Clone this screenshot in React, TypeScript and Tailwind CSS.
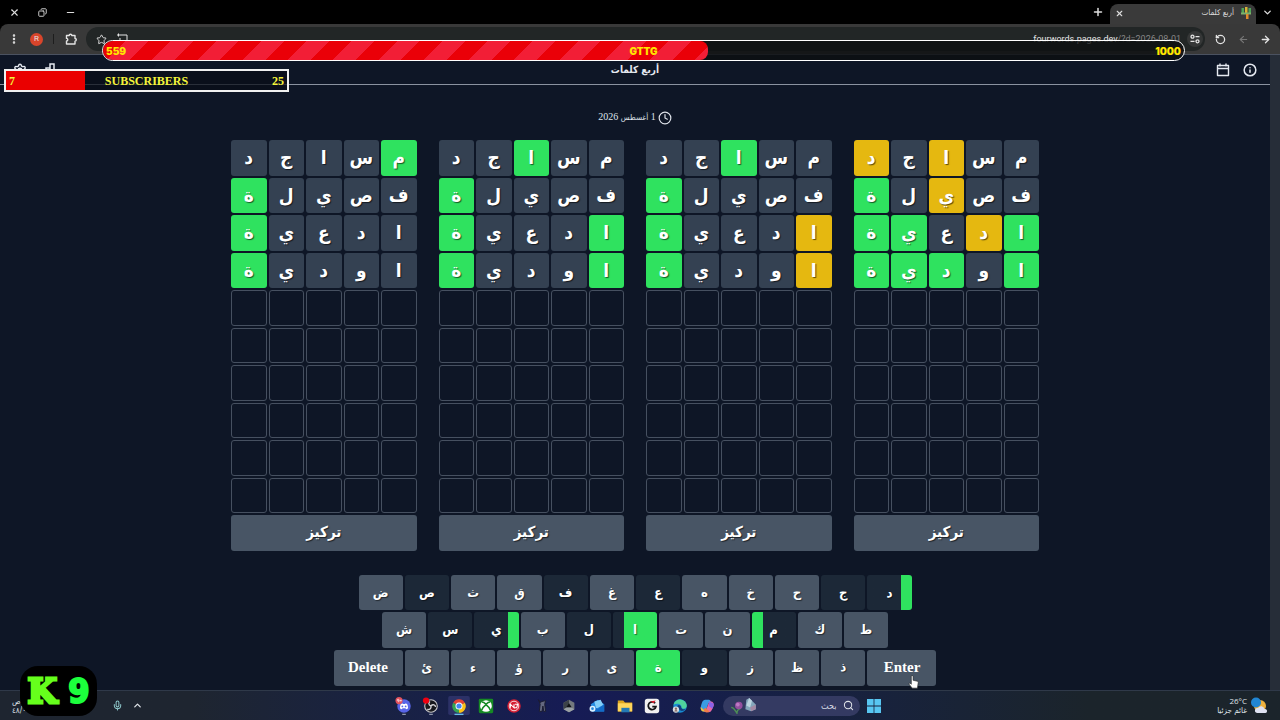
import type { ReactNode } from 'react';
import {
  ArrowLeft,
  ArrowRight,
  ChevronDown,
  ChevronUp,
  Clock,
  Copy,
  EllipsisVertical,
  Info,
  Mic,
  Minus,
  Plus,
  RotateCcw,
  Search,
  Settings,
  Star,
  X,
} from 'lucide-react';

type Mark = '-' | 'g' | 'y';

const WORDS = ['مساجد', 'فصيلة', 'ادعية', 'اودية'];

// One string per guess; marks are listed in reading order (right to left).
const BOARDS: string[][] = [
  ['--y-y', '--y-g', 'gy-gg', 'g-ggg'],
  ['--g--', '----g', 'y---g', 'y---g'],
  ['--g--', '----g', 'g---g', 'g---g'],
  ['g----', '----g', '----g', '----g'],
];

const TILE: Record<Mark, string> = {
  '-': 'bg-[#344152]',
  g: 'bg-[#2fe25f]',
  y: 'bg-[#e5b810]',
};

const EMPTY_ROWS = 6;

function Board({ marks, label }: { marks: string[]; label: string }) {
  return (
    <section
      dir="rtl"
      aria-label={label}
      className="grid auto-rows-fr grid-cols-5 gap-[2px] font-['DejaVu_Sans_Condensed','DejaVu_Sans',sans-serif]"
    >
      {WORDS.map((word, r) =>
        word.split('').map((ch, c) => (
          <div
            key={`${r}-${c}`}
            className={`flex aspect-square items-center justify-center rounded-[3px] text-[19px] leading-none font-bold text-white [text-shadow:1px_1px_1px_rgba(0,0,0,0.6)] ${TILE[marks[r][c] as Mark]}`}
          >
            {ch}
          </div>
        )),
      )}
      {Array.from({ length: EMPTY_ROWS * 5 }, (_, i) => (
        <div key={i} className="aspect-square rounded-[3px] border border-[#465060]" />
      ))}
      <button className="col-span-5 rounded-[3px] bg-[#485565] text-[15px] leading-none font-bold text-white [text-shadow:1px_1px_1px_rgba(0,0,0,0.6)]">
        تركيز
      </button>
    </section>
  );
}

const KEY_ROWS = ['ضصثقفغعهخحجد', 'شسيبلاتنمكط', 'ئءؤرىةوزظذ'];

const KEY_STYLE: Record<string, string> = {
  ص: 'bg-[#1c2837]',
  ف: 'bg-[#1c2837]',
  ع: 'bg-[#1c2837]',
  ج: 'bg-[#1c2837]',
  س: 'bg-[#1c2837]',
  ل: 'bg-[#1c2837]',
  و: 'bg-[#1c2837]',
  د: 'bg-linear-to-r from-[#1c2837] from-75% to-[#2fe25f] to-75%',
  ي: 'bg-linear-to-r from-[#1c2837] from-75% to-[#2fe25f] to-75%',
  ا: 'bg-linear-to-r from-[#1c2837] from-25% to-[#2fe25f] to-25%',
  م: 'bg-linear-to-r from-[#2fe25f] from-25% to-[#1c2837] to-25%',
  ة: 'bg-[#2fe25f]',
};

function Key({ ch }: { ch: string }) {
  return (
    <button
      className={`min-w-0 flex-1 rounded-[3px] font-['DejaVu_Sans_Condensed','DejaVu_Sans',sans-serif] text-[13px] leading-none font-bold text-white [text-shadow:1px_1px_1px_rgba(0,0,0,0.5)] ${KEY_STYLE[ch] ?? 'bg-[#485565]'}`}
    >
      {ch}
    </button>
  );
}

function WideKey({ children }: { children: ReactNode }) {
  return (
    <button className="w-[69px] shrink-0 rounded-[3px] bg-[#485565] text-[15px] leading-none font-bold text-white">
      {children}
    </button>
  );
}

const ROW_WIDTH = ['w-[553px]', 'w-[506px]', 'w-[603px]'];

function Keyboard() {
  return (
    <div dir="ltr" className="grid h-[111px] grid-rows-3 justify-items-center gap-[2px]">
      {KEY_ROWS.map((row, i) => (
        <div key={row} className={`flex max-w-full gap-[2px] ${ROW_WIDTH[i]}`}>
          {i === 2 && <WideKey>Delete</WideKey>}
          {row.split('').map((ch) => (
            <Key key={ch} ch={ch} />
          ))}
          {i === 2 && <WideKey>Enter</WideKey>}
        </div>
      ))}
    </div>
  );
}

function TabStrip() {
  return (
    <div className="flex h-6 items-center bg-black text-[#dddddd]">
      <div className="flex flex-1 items-center gap-[18px] pl-[9px]">
        <button aria-label="Close window"><X size={11} strokeWidth={2.4} /></button>
        <button aria-label="Restore window"><Copy size={9} strokeWidth={2.4} className="-scale-x-100" /></button>
        <button aria-label="Minimize window"><Minus size={11} strokeWidth={2.4} /></button>
      </div>
      <button aria-label="New tab" className="mr-[6px]"><Plus size={12} strokeWidth={3} /></button>
      <div className="mt-1 flex w-[146px] items-center self-stretch rounded-t-lg bg-[#3a3a3a] pr-[4px] pb-[2px] pl-[5px]">
        <button aria-label="Close tab"><X size={9} strokeWidth={3} /></button>
        <span dir="rtl" className="ml-auto font-['DejaVu_Sans_Condensed','DejaVu_Sans',sans-serif] text-[8px] leading-none">أربع كلمات</span>
        <svg viewBox="0 0 12 12" className="ml-[6px] size-3">
          <path d="M1.500 1h2.500v5h-2.500z" fill="#4ea558" />
          <path d="M5 0h2.500v7H5z" fill="#d8b436" />
          <path d="M8.500 1H11v5H8.500z" fill="#4ea558" />
          <path d="M1 5.500h10v2H1z" fill="#7fb06a" />
          <path d="M6 7h2.500v5H6z" fill="#e08b2c" />
        </svg>
      </div>
      <button aria-label="Search tabs" className="mr-[7px] ml-[6px]"><ChevronDown size={11} strokeWidth={3} /></button>
    </div>
  );
}

function Toolbar() {
  return (
    <div className="bg-black">
      <div className="flex h-[31px] items-center rounded-t-lg border-b border-[#4b5260] bg-[#393939] text-[#e4e4e4]">
        <button aria-label="Browser menu" className="ml-[8px]"><EllipsisVertical size={12} strokeWidth={3} /></button>
        <button className="ml-[10px] flex size-[13px] items-center justify-center rounded-full bg-[#d9452b] font-['Roboto',sans-serif] text-[8px] leading-none">R</button>
        <span className="ml-[10px] h-[10px] w-px bg-[#1d1d1d]" />
        <button aria-label="Extensions" className="ml-[11px]">
          <svg viewBox="0 0 12 12" className="size-3" fill="none" stroke="currentColor" strokeWidth="1.400" strokeLinejoin="round">
            <path d="M1.500 2.500h2.700a1.300 1.300 0 0 1 2.600 0h3.200v3a1.300 1.300 0 0 1 0 2.600v2.900H1.500V8a1.300 1.300 0 0 0 0-2.600z" />
          </svg>
        </button>
        <div className="ml-[9px] flex h-6 flex-1 items-center rounded-full bg-[#222626] pr-[2px] pl-[10px]">
          <Star size={11} strokeWidth={2} />
          <svg viewBox="0 0 12 12" className="ml-[9px] size-3" fill="none" stroke="currentColor" strokeWidth="1">
            <path d="M4 2h7v8H6M1 2h3M2.500.500v3M4 5v5" />
          </svg>
          <span className="ml-auto font-['Roboto',sans-serif] text-[9px] leading-none">
            fourwords.pages.dev<span className="text-[#858585]">/?d=2026-08-01</span>
          </span>
          <span className="ml-[6px] flex size-4 items-center justify-center rounded-full bg-[#353737]">
            <svg viewBox="0 0 10 10" className="size-[10px]" fill="none" stroke="currentColor" strokeWidth="1.300">
              <path d="M5.500 2.700H9.500M.5 7.300H4.500" />
              <circle cx="2.500" cy="2.700" r="1.500" />
              <circle cx="7.500" cy="7.300" r="1.500" />
            </svg>
          </span>
        </div>
        <button aria-label="Reload" className="ml-[10px]"><RotateCcw size={11} strokeWidth={2.8} /></button>
        <button aria-label="Forward" className="ml-[12px] text-[#777777]"><ArrowLeft size={11} strokeWidth={2.4} /></button>
        <button aria-label="Back" className="mr-[9px] ml-[11px]"><ArrowRight size={11} strokeWidth={2.8} /></button>
      </div>
    </div>
  );
}

function PageHeader() {
  return (
    <header className="grid h-[30px] grid-cols-3 items-center border-b border-[#8a92a0] px-[13px] text-[#e5e9f0]">
      <div className="flex gap-[14px]">
        <button aria-label="Settings"><Settings size={14} strokeWidth={2.4} /></button>
        <button aria-label="Statistics">
          <svg viewBox="0 0 14 14" className="size-[14px]" fill="none" stroke="currentColor" strokeWidth="1.500">
            <path d="M1 9h4v4H1zM5 5h4v8H5zM9 1h4v12H9z" />
          </svg>
        </button>
      </div>
      <h1 dir="rtl" className="text-center font-['DejaVu_Sans_Condensed','DejaVu_Sans',sans-serif] text-[10px] leading-none font-bold">أربع كلمات</h1>
      <div className="flex justify-end gap-[13px]">
        <button aria-label="Calendar">
          <svg viewBox="0 0 14 14" className="size-[14px]" fill="none" stroke="currentColor" strokeWidth="1.400" strokeLinejoin="round">
            <path d="M1.500 2.500h11v10h-11zM1.500 5.500h11M4 .5v3M10 .5v3" />
          </svg>
        </button>
        <button aria-label="Help"><Info size={14} strokeWidth={2.6} /></button>
      </div>
    </header>
  );
}

const APP_ICONS: { name: string; art: ReactNode }[] = [
  {
    name: 'Discord',
    art: (
      <>
        <circle cx="10" cy="10" r="7.500" fill="#5865e8" />
        <path d="M5.500 12.500c0-2.500.7-4.500 1.500-5l1.500-.4.500.8h2l.5-.8 1.500.4c.8.5 1.500 2.500 1.500 5-.8.8-1.500 1-2.300 1l-.5-.9h-3.400l-.5.900c-.8 0-1.500-.2-2.300-1z" fill="#fff" />
        <circle cx="8.200" cy="10.500" r="1" fill="#5865e8" />
        <circle cx="11.800" cy="10.500" r="1" fill="#5865e8" />
        <circle cx="4.500" cy="4" r="4" fill="#e2515c" />
        <circle cx="3.500" cy="3.500" r="1" fill="none" stroke="#fff" strokeWidth=".7" />
        <path d="M4.500 3.500c0 1 0 2-1 2M5.500 4h2M6.500 3v2" stroke="#fff" strokeWidth=".7" fill="none" />
        <path d="M8 19.300h4" stroke="#8f96ab" strokeWidth="1.400" />
      </>
    ),
  },
  {
    name: 'OBS Studio',
    art: (
      <>
        <circle cx="10" cy="10" r="7" fill="#17181c" stroke="#c9c9cc" strokeWidth="1.200" />
        <path d="M10 10c-3-1-3-4-1-5M10 10c2-2.500 5-1 5 1M10 10c.5 3-2 5-4 3.500" fill="none" stroke="#d5d5d8" strokeWidth="1.500" />
        <circle cx="4.500" cy="4" r="3.500" fill="#f00010" />
        <path d="M8 19.300h4" stroke="#8f96ab" strokeWidth="1.400" />
      </>
    ),
  },
  {
    name: 'Chrome',
    art: (
      <>
        <rect x="-2" y="-1" width="24" height="21" rx="2" fill="#2c3167" />
        <path d="M10 10L3.500 6.250A7.500 7.500 0 0 1 16.500 6.250z" fill="#e44335" />
        <path d="M10 10L16.500 6.250A7.500 7.500 0 0 1 10 17.500z" fill="#fbc116" />
        <path d="M10 10V17.500A7.500 7.500 0 0 1 3.500 6.250z" fill="#34a353" />
        <circle cx="10" cy="10" r="3.900" fill="#fff" />
        <circle cx="10" cy="10" r="2.900" fill="#4285f4" />
        <path d="M5 19.300h10" stroke="#67bde9" strokeWidth="1.500" />
      </>
    ),
  },
  {
    name: 'Xbox',
    art: (
      <>
        <rect x="2" y="2" width="16" height="16" rx="1.500" fill="#168a24" />
        <circle cx="10" cy="10" r="6.500" fill="#fff" />
        <path d="M5 15c1-3 3-5 5-6.500 2 1.500 4 3.500 5 6.500M5.500 5.500C7.500 5.500 9 7 10 8c1-1 2.500-2.500 4.500-2.500" fill="none" stroke="#168a24" strokeWidth="1.800" />
      </>
    ),
  },
  {
    name: 'Nitro',
    art: (
      <>
        <circle cx="10" cy="10" r="7.500" fill="#d61f33" />
        <circle cx="10" cy="10" r="5.300" fill="none" stroke="#fff" strokeWidth=".9" />
        <path d="M6 12V8l4 4V8M10 12h3l1-4h-3" fill="none" stroke="#fff" strokeWidth="1.200" />
      </>
    ),
  },
  {
    name: 'Game',
    art: (
      <path d="M6 3l2 3 2-1 4-1-1 4 1 8h-2l-1-6-1 6H7l1-8z" fill="#646880" stroke="#181a2c" strokeWidth="1" />
    ),
  },
  {
    name: 'Roblox Studio',
    art: (
      <>
        <path d="M10 3l6 3.500v7L10 17l-6-3.500v-7z" fill="#73797e" />
        <path d="M10 3v5l-3 4-3 1.500v-7z" fill="#3c4247" />
        <path d="M10 7l3 4.500H7z" fill="#111417" />
        <path d="M7 12h6l3 1.500L10 17l-6-3.500z" fill="#9aa0a4" />
      </>
    ),
  },
  {
    name: 'Mail',
    art: (
      <>
        <path d="M3 8l8-5 7 5v8H5z" fill="#258be0" />
        <path d="M7 5l7-2 3 6-8 4z" fill="#83cef8" />
        <path d="M4 10l7 3 7-5v8H4z" fill="#126bc9" />
        <circle cx="5" cy="13" r="3.300" fill="#d9f0ff" />
        <circle cx="5" cy="13" r="1.500" fill="#2187dc" />
      </>
    ),
  },
  {
    name: 'Files',
    art: (
      <>
        <path d="M2 4h6l2 2h8v10H2z" fill="#dda61f" />
        <path d="M2 7h16v9H2z" fill="#ffd65b" />
        <path d="M6 12h9v5H6z" fill="#2379b5" />
      </>
    ),
  },
  {
    name: 'G Hub',
    art: (
      <>
        <rect x="2" y="2" width="16" height="16" rx="3" fill="#f1f1f1" />
        <path d="M13.500 7A4.300 4.300 0 1 0 14.300 10.800h-4" fill="none" stroke="#151515" strokeWidth="2" />
        <path d="M8 5l6-1-2 3z" fill="#d91f2c" />
      </>
    ),
  },
  {
    name: 'Edge',
    art: (
      <>
        <circle cx="10" cy="10" r="7.500" fill="#188bd0" />
        <path d="M2.700 8.500A7.500 7.500 0 0 1 17.500 10c0 3-4.500 4-6 2 1-3-3-6-8.800-3.500z" fill="#4fd29c" />
        <path d="M7 10c1-2 4-1.500 4.500 2 .5 1.500 3 2 4.500 1.500-2 3-8 3-9-3.500z" fill="#123f7c" />
        <circle cx="5.500" cy="14" r="3.500" fill="#d6dde3" />
        <circle cx="5.500" cy="13" r="1.300" fill="#8a6a61" />
        <path d="M3.500 16c1-2 3-2 4 0z" fill="#8a6a61" />
      </>
    ),
  },
  {
    name: 'Copilot',
    art: (
      <>
        <path d="M8 3h4c1.500 0 2 1 2.500 3l-3 1-3 9H6c-2 0-3.500-2-3-4.500C4 7 5 3 8 3z" fill="#3b9ce2" />
        <path d="M3 11l5.500 5H6c-2 0-3.300-2-3-5z" fill="#f0c13d" />
        <path d="M12 17H9c-1.500 0-2-1-2.500-3l3-1 3-8h2c2 0 3.500 2 3 4.500C16 13 15 17 12 17z" fill="#e867a5" />
        <path d="M12 5l5 2c1 2 0 4-1 6l-4-3z" fill="#8b63e8" />
        <path d="M8 12l5 4c-1 1-3 1-4 1-1.500 0-2-1-2.500-3z" fill="#ef7b45" />
      </>
    ),
  },
];

function Taskbar() {
  return (
    <footer className="flex h-[30px] items-center border-t border-[#2f3949] bg-linear-to-r from-[#1e2530] from-15% via-[#161b55] via-45% to-[#1b242b] to-85% font-['DejaVu_Sans_Condensed','DejaVu_Sans',sans-serif] text-[#dfe3e8]">
      <div className="flex flex-1 items-center">
        <div className="w-[70px] pl-[12px] text-[8px] leading-[9px]">
          <div>ص</div>
          <div>٤٨/٠</div>
        </div>
        <Mic size={11} strokeWidth={2.2} className="ml-[42px] text-[#8fc9cc]" />
        <button aria-label="Hidden icons" className="ml-[9px]"><ChevronUp size={11} strokeWidth={2.8} /></button>
      </div>
      <nav className="ml-2 flex items-center gap-[6px]">
        <div className="flex w-[322px] items-center justify-between">
          {APP_ICONS.map((app) => (
            <button key={app.name} aria-label={app.name} className="w-[18px] shrink-0">
              <svg viewBox="0 0 20 20" className="size-[18px] overflow-visible">{app.art}</svg>
            </button>
          ))}
        </div>
        <label className="flex h-5 w-[137px] items-center rounded-full bg-[#343a62] px-[6px]">
          <svg viewBox="0 0 30 18" className="h-[17px] w-[29px] shrink-0">
            <path d="M2 11c3 0 4 3 6 6 0-3 1-4 4-5" fill="none" stroke="#4d8f56" strokeWidth="1.500" />
            <circle cx="10" cy="9" r="4" fill="#94509f" />
            <circle cx="9" cy="8" r="2" fill="#bd79c4" />
            <path d="M18 3l3-2 3 3 4 4v5l-5 2-6-2z" fill="#84a7bb" />
            <path d="M21 1l3 3-2 7-4-2z" fill="#bcd5df" />
            <path d="M22 11l6-3v5l-5 2z" fill="#a489a4" />
          </svg>
          <input
            dir="rtl"
            aria-label="بحث"
            placeholder="بحث"
            className="w-full min-w-0 flex-1 bg-transparent pr-[6px] text-[9px] leading-none outline-none placeholder:text-[#d5d8e4]"
          />
          <Search size={11} strokeWidth={2.2} className="shrink-0" />
        </label>
        <button aria-label="Start">
          <svg viewBox="0 0 16 16" className="size-4">
            <path d="M1 1h6.600v6.600H1zM8.400 1H15v6.600H8.400zM1 8.400h6.600V15H1zM8.400 8.400H15V15H8.400z" fill="#58c6f1" />
          </svg>
        </button>
      </nav>
      <div className="flex flex-1 items-center justify-end gap-[3px] pr-[12px]">
        <div className="text-right text-[8px] leading-[10px]">
          <div className="font-['Open_Sans',sans-serif]">26°C</div>
          <div dir="rtl">غائم جزئيا</div>
        </div>
        <svg viewBox="0 0 18 18" className="size-[18px]">
          <circle cx="10" cy="9" r="6" fill="#efb23e" />
          <path d="M7 16a2.500 2.500 0 0 1 1-5 3.500 3.500 0 0 1 6.500 1 2 2 0 0 1 1 4z" fill="#dfe2f2" />
          <circle cx="6" cy="5.500" r="5" fill="#2186d3" />
        </svg>
      </div>
    </footer>
  );
}

function GoalBar() {
  return (
    <div className="absolute top-[40px] right-[95px] left-[102px] h-[21px] overflow-hidden rounded-full border border-white bg-[#0c0f10]/80 font-['Inter',sans-serif] text-[10px] leading-none font-black text-[#ffe600]">
      <div className="h-full w-[56%] rounded-r-lg bg-[#ea0008] bg-[repeating-linear-gradient(135deg,transparent_0_16px,#f21e36_16px_32px)]" />
      <div className="absolute inset-0 flex items-center justify-between px-[3px]">
        <span className="w-20">559</span>
        <span>GTTG</span>
        <span className="w-20 text-right">1000</span>
      </div>
    </div>
  );
}

function SubscriberBar() {
  return (
    <div className="absolute top-[69px] left-[4px] h-[23px] w-[285px] border-2 border-[#f0f0f0] bg-[#0a0e18]/75 text-xs leading-none font-bold text-[#f5f53a]">
      <div className="h-full w-[79px] bg-[#ea0000]" />
      <div className="absolute inset-0 flex items-center justify-between px-[3px]">
        <span className="w-5">7</span>
        <span>SUBSCRIBERS</span>
        <span className="w-5 text-right">25</span>
      </div>
    </div>
  );
}

export default function App() {
  return (
    <div dir="ltr" className="relative flex min-h-screen flex-col overflow-hidden bg-[#0e1626] font-['Liberation_Serif','DejaVu_Sans_Condensed','DejaVu_Sans',serif]">
      <TabStrip />
      <Toolbar />
      <div className="flex flex-1">
        <div className="flex min-w-0 flex-1 flex-col">
          <PageHeader />
          <main className="flex flex-1 flex-col items-center">
            <p dir="rtl" className="mt-[25px] flex items-center gap-[2px] text-[10px] leading-[14px] text-[#dfe3ea]">
              <Clock size={14} strokeWidth={2} />
              <time dateTime="2026-08-01">
                1 <span className="text-[8px]">أغسطس</span> 2026
              </time>
            </p>
            <div dir="rtl" className="mt-[15px] mb-[24px] grid w-[808px] max-w-full grid-cols-4 gap-x-[22px]">
              {BOARDS.map((marks, i) => (
                <Board key={i} marks={marks} label={`لوحة ${i + 1}`} />
              ))}
            </div>
            <Keyboard />
          </main>
        </div>
        <div className="w-[10px] bg-[#262d38]" />
      </div>
      <Taskbar />

      <GoalBar />
      <SubscriberBar />

      <div className="absolute bottom-[4px] left-[20px] flex h-[50px] w-[77px] items-center justify-center gap-[11px] rounded-[18px] bg-black leading-none font-bold">
        <span className="font-['DejaVu_Serif',serif] text-[34px] text-[#66ff1c] [-webkit-text-stroke:3px_#66ff1c]">K</span>
        <span className="font-['DejaVu_Sans_Condensed','DejaVu_Sans',sans-serif] text-[34px] text-[#1cff3c] [-webkit-text-stroke:2px_#1cff3c]">9</span>
      </div>

      <svg viewBox="0 0 12 16" className="absolute top-[675px] left-[908px] h-[14px] w-[11px]">
        <path d="M3.500 1.500c0-1 2-1 2 0V6l5 1.200c1 .3 1 1 .8 2L10.500 15h-6L1 10.500c-.5-1 .7-1.600 1.400-.9l1.100 1z" fill="#fff" stroke="#222" strokeWidth=".7" />
      </svg>
    </div>
  );
}
